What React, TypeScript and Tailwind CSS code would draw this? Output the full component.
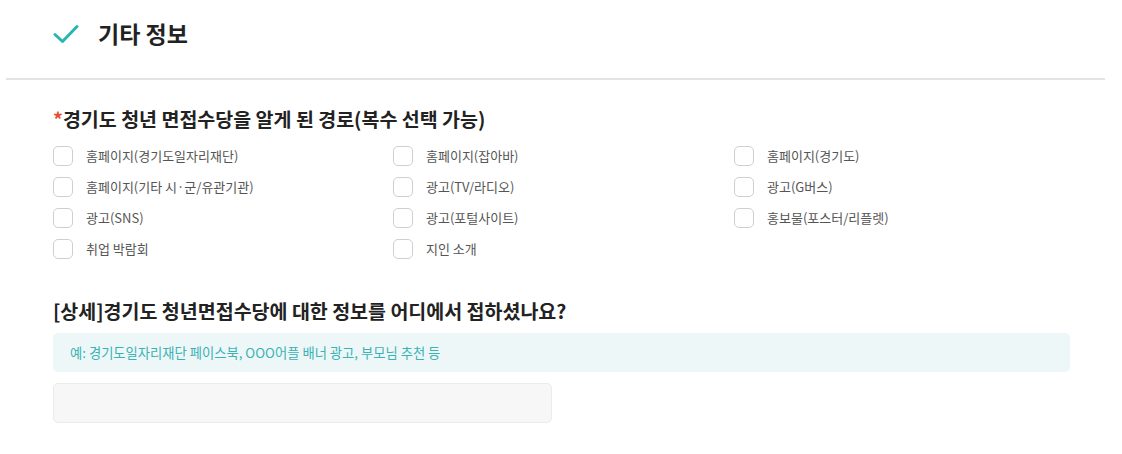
const FONT = "font-['Noto_Sans_CJK_KR','Noto_Sans',sans-serif]";

const OPTIONS = [
  "홈페이지(경기도일자리재단)",
  "홈페이지(잡아바)",
  "홈페이지(경기도)",
  "홈페이지(기타 시·군/유관기관)",
  "광고(TV/라디오)",
  "광고(G버스)",
  "광고(SNS)",
  "광고(포털사이트)",
  "홍보물(포스터/리플렛)",
  "취업 박람회",
  "지인 소개",
];

export default function App() {
  return (
    <div className={`${FONT} bg-white w-[1122px] h-[454px] px-[6px]`}>
      <div className="w-[1099px] h-[80px] border-b-2 border-[#e3e3e3] flex items-center pl-[47px] pb-[11px]">
        <svg width="26" height="20" viewBox="0 0 26 20" fill="none">
          <path
            d="M2 10.5 L9.5 17.5 L24 2.5"
            stroke="#2bb5b0"
            strokeWidth="3"
            strokeLinecap="round"
            strokeLinejoin="round"
          />
        </svg>
        <h1 className="ml-[19px] text-[23px] font-bold text-[#222] leading-none">기타 정보</h1>
      </div>

      <div className="pl-[47px] pt-[26px]">
        <h2 className="text-[19.5px] font-bold text-[#222] leading-[26px]">
          <span className="text-[#e5502e]">*</span>경기도 청년 면접수당을 알게 된 경로(복수 선택 가능)
        </h2>
        <div className="grid grid-cols-[340px_341px_340px] mt-[8px]">
          {OPTIONS.map((o) => (
            <label key={o} className="flex items-center h-[31px] gap-[13px]">
              <span className="w-[20px] h-[20px] rounded-[5px] border border-[#cfcfcf] bg-white shrink-0" />
              <span className="text-[13px] text-[#555] leading-none">{o}</span>
            </label>
          ))}
        </div>

        <h2 className="mt-[34px] text-[19.5px] font-bold text-[#222] leading-[26px]">
          [상세]경기도 청년면접수당에 대한 정보를 어디에서 접하셨나요?
        </h2>
        <div className="mt-[9px] w-[1017px] h-[39px] rounded-[5px] bg-[#eef7f8] flex items-center pl-[17px]">
          <span className="text-[13.3px] text-[#3ab3b3]">예: 경기도일자리재단 페이스북, OOO어플 배너 광고, 부모님 추천 등</span>
        </div>
        <input
          type="text"
          className="mt-[11px] block w-[499px] h-[40px] rounded-[5px] bg-[#f7f7f7] border border-[#ebebeb] outline-none px-3 text-[13px]"
        />
      </div>
    </div>
  );
}
